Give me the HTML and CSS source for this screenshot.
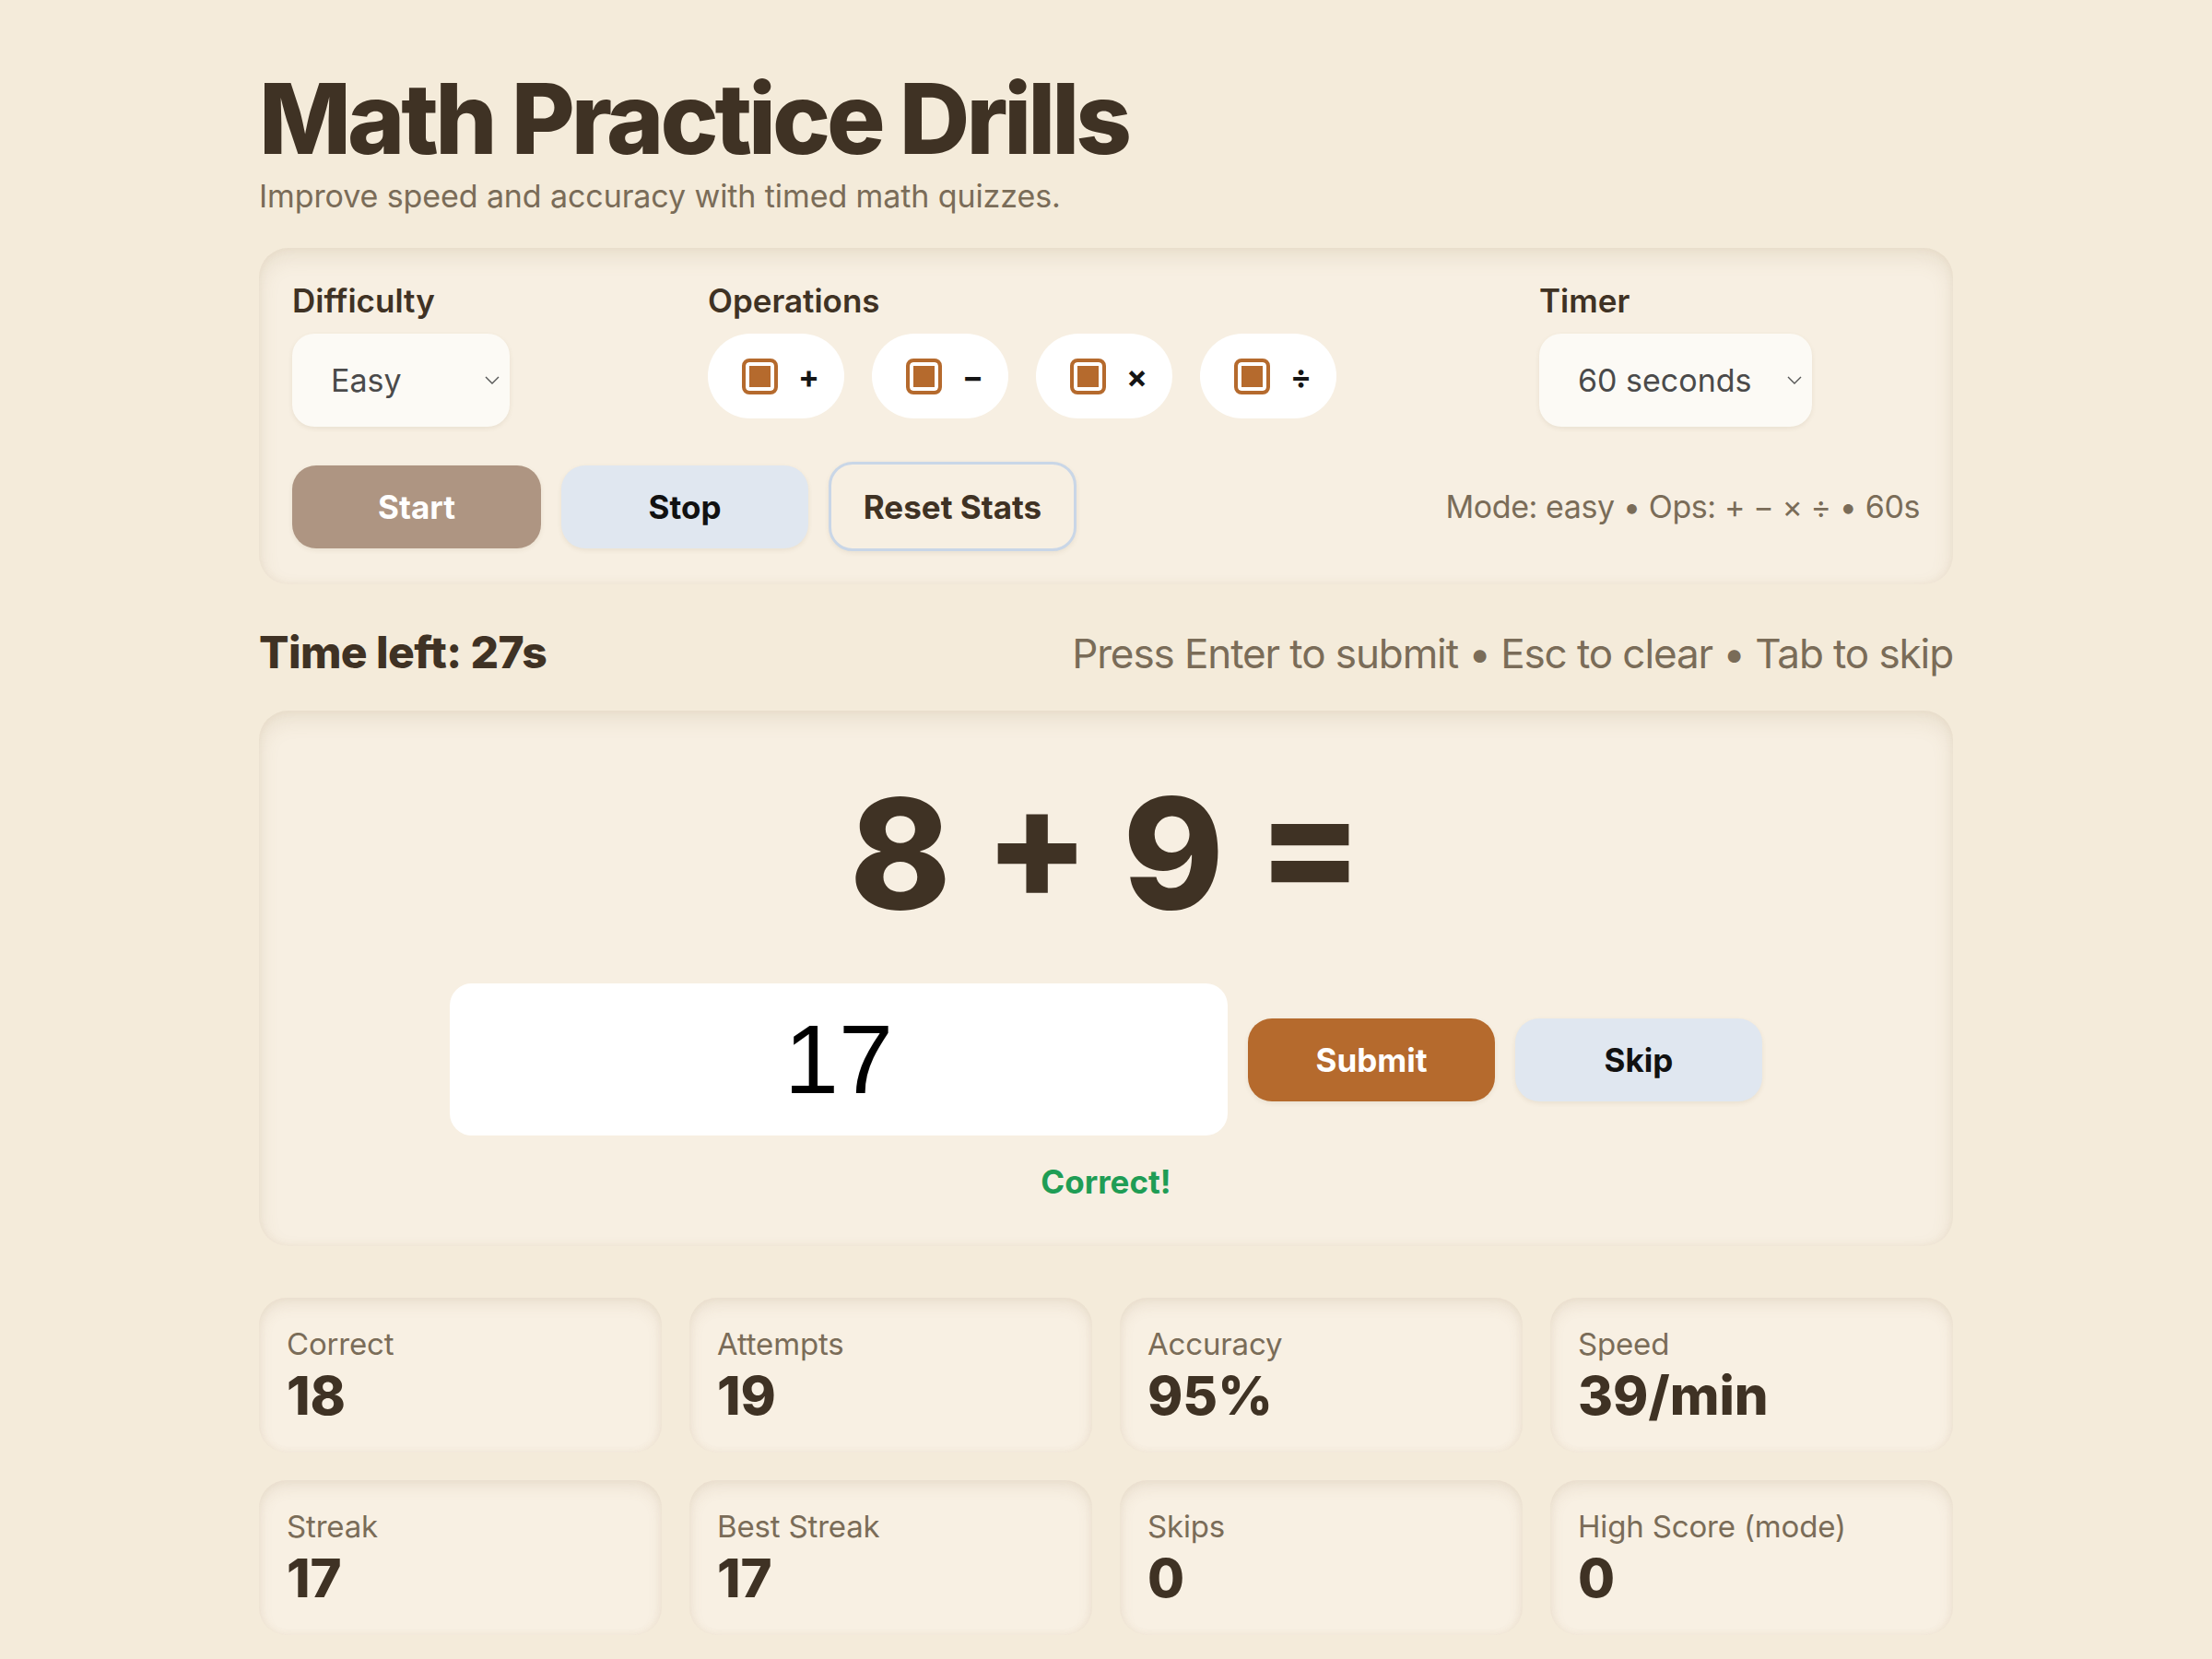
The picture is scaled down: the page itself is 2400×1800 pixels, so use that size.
FILE: index.html
```html
<!DOCTYPE html>
<html lang="en">
<head>
<meta charset="utf-8">
<title>Math Practice Drills</title>
<link rel="stylesheet" href="styles.css">
</head>
<body>
<main class="page">
  <h1 class="title">Math Practice Drills</h1>
  <p class="subtitle">Improve speed and accuracy with timed math quizzes.</p>

  <section class="panel">
    <div class="field">
      <label class="field-label" for="difficulty">Difficulty</label>
      <div class="select-wrap select-easy">
        <select id="difficulty" class="select">
          <option>Easy</option>
          <option>Medium</option>
          <option>Hard</option>
        </select>
        <svg class="chev" viewBox="0 0 16 9" width="16" height="9" aria-hidden="true"><polyline points="1,1 8,8 15,1" fill="none" stroke="#555" stroke-width="1.4"/></svg>
      </div>
    </div>

    <div class="field field-ops">
      <span class="field-label">Operations</span>
      <div class="ops">
        <label class="op"><input type="checkbox" class="check" checked><span class="op-sym">+</span></label>
        <label class="op"><input type="checkbox" class="check" checked><span class="op-sym">−</span></label>
        <label class="op"><input type="checkbox" class="check" checked><span class="op-sym">×</span></label>
        <label class="op"><input type="checkbox" class="check" checked><span class="op-sym">÷</span></label>
      </div>
    </div>

    <div class="field">
      <label class="field-label" for="timer">Timer</label>
      <div class="select-wrap select-timer">
        <select id="timer" class="select">
          <option>30 seconds</option>
          <option selected>60 seconds</option>
          <option>90 seconds</option>
          <option>120 seconds</option>
        </select>
        <svg class="chev" viewBox="0 0 16 9" width="16" height="9" aria-hidden="true"><polyline points="1,1 8,8 15,1" fill="none" stroke="#555" stroke-width="1.4"/></svg>
      </div>
    </div>

    <div class="actions">
      <div class="btn-group">
        <button class="btn btn-start">Start</button>
        <button class="btn btn-soft">Stop</button>
        <button class="btn btn-outline">Reset Stats</button>
      </div>
      <div class="mode">Mode: easy • Ops: + − × ÷ • 60s</div>
    </div>
  </section>

  <div class="time-row">
    <div class="time-left">Time left: 27s</div>
    <div class="hint">Press Enter to submit • Esc to clear • Tab to skip</div>
  </div>

  <section class="quiz">
    <div class="equation">8 + 9 =</div>
    <div class="answer-row">
      <input class="answer" type="text" value="17">
      <button class="btn btn-submit">Submit</button>
      <button class="btn btn-soft">Skip</button>
    </div>
    <div class="feedback">Correct!</div>
  </section>

  <section class="stats">
    <div class="stat"><div class="stat-label">Correct</div><div class="stat-value">18</div></div>
    <div class="stat"><div class="stat-label">Attempts</div><div class="stat-value">19</div></div>
    <div class="stat"><div class="stat-label">Accuracy</div><div class="stat-value">95%</div></div>
    <div class="stat"><div class="stat-label">Speed</div><div class="stat-value">39/min</div></div>
    <div class="stat"><div class="stat-label">Streak</div><div class="stat-value">17</div></div>
    <div class="stat"><div class="stat-label">Best Streak</div><div class="stat-value">17</div></div>
    <div class="stat"><div class="stat-label">Skips</div><div class="stat-value">0</div></div>
    <div class="stat"><div class="stat-label">High Score (mode)</div><div class="stat-value">0</div></div>
  </section>
</main>
</body>
</html>
```

FILE: styles.css
```css
* { box-sizing: border-box; }

html, body {
  margin: 0;
  background: #f4ebda;
}

body {
  font-family: Inter, "Noto Sans", "Liberation Sans", sans-serif;
  color: #3f3224;
}

.page {
  max-width: 1838px;
  margin: 0 auto;
  padding: 76px 0 40px;
}

.title {
  margin: 0;
  font-size: 106px;
  font-weight: 800;
  line-height: 1;
  letter-spacing: -0.038em;
  color: #3f3224;
}

.subtitle {
  margin: 10px 0 0;
  font-size: 34px;
  line-height: 41px;
  letter-spacing: -0.003em;
  color: #7a6c58;
}

.panel {
  margin-top: 36px;
  padding: 36px;
  border-radius: 32px;
  background: #f7efe2;
  box-shadow: inset 0 10px 22px rgba(150, 120, 80, 0.13), inset 0 0 10px rgba(150, 120, 80, 0.08);
  display: grid;
  grid-template-columns: repeat(4, 1fr);
  column-gap: 38px;
  row-gap: 38px;
}

.field {
  display: flex;
  flex-direction: column;
  align-items: flex-start;
  gap: 15px;
}

.field-ops { grid-column: span 2; }

.field-label {
  font-size: 35px;
  font-weight: 600;
  line-height: 42px;
  color: #3f3224;
}

.select-wrap {
  position: relative;
  height: 101px;
}

.select-easy { width: 236px; }
.select-timer { width: 296px; }

.select {
  appearance: none;
  -webkit-appearance: none;
  width: 100%;
  height: 100%;
  border: 0;
  border-radius: 24px;
  background: #fcfaf5;
  padding: 0 0 0 42px;
  font-family: Inter, "Noto Sans", sans-serif;
  font-size: 34px;
  color: #4a4a4a;
  box-shadow: 0 2px 5px rgba(120, 95, 60, 0.10);
}

.chev {
  position: absolute;
  right: 11px;
  top: 46px;
  pointer-events: none;
}

.ops {
  display: flex;
  gap: 30px;
}

.op {
  display: flex;
  align-items: center;
  gap: 22px;
  height: 92px;
  width: 148px;
  padding-left: 37px;
  border-radius: 999px;
  background: #ffffff;
}

.check {
  appearance: none;
  -webkit-appearance: none;
  margin: 0;
  width: 39px;
  height: 39px;
  border: 4px solid #b56a2d;
  border-radius: 8px;
  background: #b56a2d;
  box-shadow: inset 0 0 0 4px #ffffff;
}

.op-sym {
  font-size: 34px;
  font-weight: 700;
  color: #151515;
}

.actions {
  grid-column: 1 / -1;
  display: flex;
  align-items: center;
  justify-content: space-between;
}

.btn-group {
  display: flex;
  align-items: center;
  gap: 22px;
}

.btn {
  height: 90px;
  min-width: 270px;
  padding: 0 30px;
  border: 0;
  border-radius: 26px;
  font-family: Inter, "Noto Sans", sans-serif;
  font-size: 35px;
  font-weight: 700;
  box-shadow: 0 2px 5px rgba(120, 95, 60, 0.10);
}

.btn-start {
  background: #ae9582;
  color: #ffffff;
}

.btn-soft {
  background: #e0e7f0;
  color: #111111;
}

.btn-outline {
  min-width: 269px;
  height: 97px;
  background: #f7efe2;
  border: 3px solid #c9d6e7;
  color: #3f3224;
}

.btn-submit {
  background: #b56a2d;
  color: #ffffff;
}

.mode {
  font-size: 34px;
  letter-spacing: -0.012em;
  color: #7a6c58;
}

.time-row {
  margin: 45px 0 34px;
  display: flex;
  align-items: baseline;
  justify-content: space-between;
}

.time-left {
  font-size: 48px;
  font-weight: 800;
  line-height: 58px;
  letter-spacing: -0.012em;
  color: #3f3224;
}

.hint {
  font-size: 44px;
  letter-spacing: -0.025em;
  color: #7a6c58;
}

.quiz {
  padding: 72px 0 49px;
  border-radius: 32px;
  background: #f7efe2;
  box-shadow: inset 0 10px 22px rgba(150, 120, 80, 0.13), inset 0 0 10px rgba(150, 120, 80, 0.08);
  text-align: center;
}

.equation {
  font-size: 166px;
  font-weight: 800;
  line-height: 1;
  color: #3f3224;
}

.answer-row {
  margin-top: 58px;
  display: flex;
  align-items: center;
  justify-content: center;
  gap: 22px;
}

.answer {
  width: 844px;
  height: 165px;
  border: 0;
  border-radius: 24px;
  background: #ffffff;
  text-align: center;
  font-family: "Liberation Sans", Arial, sans-serif;
  font-size: 106px;
  color: #000000;
  outline: none;
}

.btn-soft.btn, .btn-submit.btn { min-width: 268px; }

.feedback {
  margin-top: 29px;
  font-size: 35px;
  font-weight: 700;
  line-height: 42px;
  color: #1f9d55;
}

.stats {
  margin-top: 56px;
  display: grid;
  grid-template-columns: repeat(4, 1fr);
  gap: 30px;
}

.stat {
  padding: 30px;
  border-radius: 30px;
  background: #f8f0e3;
  box-shadow: inset 0 8px 16px rgba(150, 120, 80, 0.11), inset 0 0 8px rgba(150, 120, 80, 0.08);
}

.stat-label {
  font-size: 33px;
  line-height: 40px;
  letter-spacing: -0.005em;
  color: #7a6c58;
}

.stat-value {
  margin-top: 4px;
  font-size: 58px;
  font-weight: 800;
  line-height: 64px;
  color: #3f3224;
}
```
